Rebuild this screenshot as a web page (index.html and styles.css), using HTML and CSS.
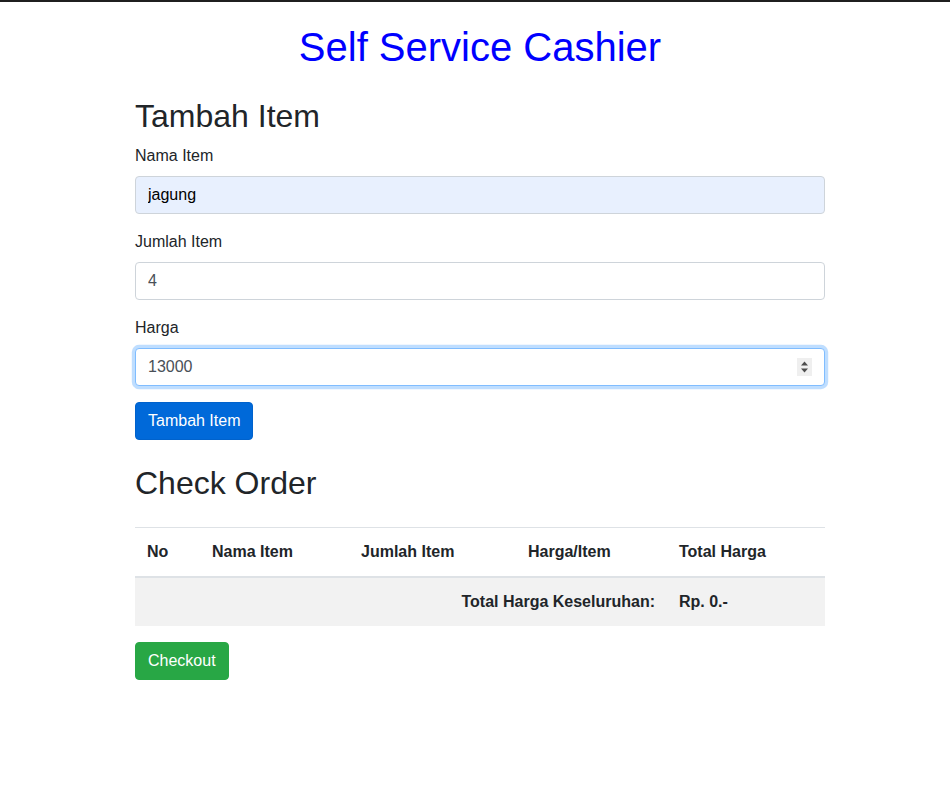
FILE: index.html
```html
<!DOCTYPE html>
<html lang="id">
<head>
<meta charset="utf-8">
<title>Self Service Cashier</title>
<link rel="stylesheet" href="styles.css">
</head>
<body>
<div class="container">
  <h1 class="title">Self Service Cashier</h1>
  <h2 class="section-title form-title">Tambah Item</h2>
  <form class="item-form">
    <div class="form-group">
      <label class="form-label" for="nama">Nama Item</label>
      <input class="form-control autofilled" id="nama" type="text" value="jagung">
    </div>
    <div class="form-group">
      <label class="form-label" for="jumlah">Jumlah Item</label>
      <input class="form-control" id="jumlah" type="text" value="4">
    </div>
    <div class="form-group">
      <label class="form-label" for="harga">Harga</label>
      <div class="number-wrap">
        <input class="form-control focused" id="harga" type="number" value="13000">
        <span class="spinner" aria-hidden="true">
          <svg width="15" height="18" viewBox="0 0 15 18"><path d="M4 7.5 L7.5 3.5 L11 7.5 Z" fill="#4d4d4d"/><path d="M4 10.5 L7.5 14.5 L11 10.5 Z" fill="#4d4d4d"/></svg>
        </span>
      </div>
    </div>
    <button type="button" class="btn btn-primary">Tambah Item</button>
  </form>
  <h2 class="section-title">Check Order</h2>
  <table class="order-table">
    <colgroup>
      <col class="c-no"><col class="c-nama"><col class="c-jumlah"><col class="c-harga"><col class="c-total">
    </colgroup>
    <thead>
      <tr><th>No</th><th>Nama Item</th><th>Jumlah Item</th><th>Harga/Item</th><th>Total Harga</th></tr>
    </thead>
    <tbody>
      <tr class="striped"><td colspan="4" class="sum-label">Total Harga Keseluruhan:</td><td class="sum-value">Rp. 0.-</td></tr>
    </tbody>
  </table>
  <button type="button" class="btn btn-success">Checkout</button>
</div>
</body>
</html>
```
FILE: styles.css
```css
* { box-sizing: border-box; }
html, body { margin: 0; padding: 0; }
body {
  border-top: 2px solid #1f1f1f;
  font-family: "Liberation Sans", Arial, sans-serif;
  font-size: 16px;
  line-height: 24px;
  color: #212529;
  background: #fff;
}
.container {
  width: 690px;
  margin-left: calc(50% - 340px);
}
.title {
  margin: 21px 0 26px;
  font-size: 40px;
  line-height: 48px;
  font-weight: 400;
  text-align: center;
  color: #0000ff;
}
.section-title {
  margin: 0 0 8px;
  font-size: 32px;
  line-height: 38.4px;
  font-weight: 400;
  color: #212529;
}
.form-title { margin-bottom: 9px; }
.item-form { margin: 0 0 24px; }
.form-group { margin-bottom: 16px; }
.form-label {
  display: block;
  margin-bottom: 8px;
}
.form-control {
  display: block;
  width: 100%;
  height: 38px;
  padding: 6px 12px;
  font-family: inherit;
  font-size: 16px;
  line-height: 24px;
  color: #495057;
  background: #fff;
  border: 1px solid #ced4da;
  border-radius: 4px;
  outline: none;
  margin: 0;
}
.autofilled { background: #e8f0fe; color: #000; }
.focused {
  border-color: #80bdff;
  box-shadow: 0 0 0 3.2px rgba(0, 123, 255, .25);
}
.form-control[type=number] { -moz-appearance: textfield; }
.form-control::-webkit-outer-spin-button,
.form-control::-webkit-inner-spin-button { -webkit-appearance: none; margin: 0; }
.number-wrap { position: relative; }
.spinner {
  position: absolute;
  top: 10px;
  right: 13px;
  width: 15px;
  height: 18px;
  background: #efefef;
  display: block;
}
.spinner svg { display: block; }
.btn {
  display: inline-block;
  height: 38px;
  padding: 6px 12px;
  font-family: inherit;
  font-size: 16px;
  line-height: 24px;
  color: #fff;
  border: 1px solid transparent;
  border-radius: 4px;
  cursor: pointer;
}
.btn-primary { background: #0069d9; border-color: #0062cc; }
.btn-success { background: #28a745; border-color: #28a745; }
.order-table {
  width: 100%;
  margin: 24px 0 16px;
  border-collapse: collapse;
  table-layout: fixed;
}
.c-no { width: 65px; }
.c-nama { width: 149px; }
.c-jumlah { width: 167px; }
.c-harga { width: 151px; }
.c-total { width: 158px; }
.order-table th,
.order-table td {
  padding: 12px;
  border-top: 1px solid #dee2e6;
  text-align: left;
  vertical-align: top;
  font-weight: 700;
}
.order-table thead th { border-bottom: 2px solid #dee2e6; }
.striped td { background: #f2f2f2; }
.order-table td.sum-label { text-align: right; }
```
